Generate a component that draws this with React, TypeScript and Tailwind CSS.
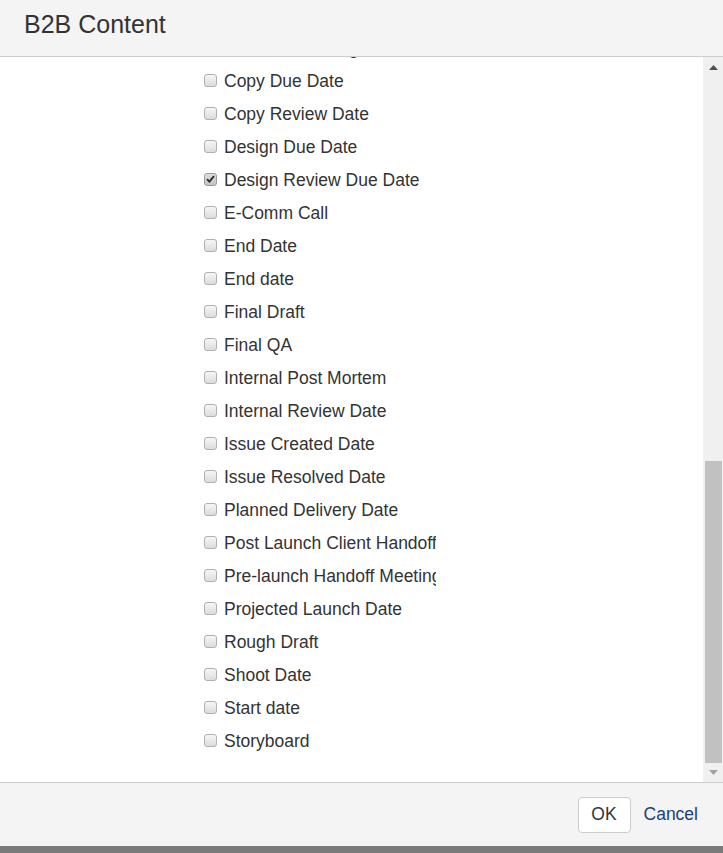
import React from "react";

const fields: { label: string; checked?: boolean }[] = [
  { label: "Content Planning" },
  { label: "Copy Due Date" },
  { label: "Copy Review Date" },
  { label: "Design Due Date" },
  { label: "Design Review Due Date", checked: true },
  { label: "E-Comm Call" },
  { label: "End Date" },
  { label: "End date" },
  { label: "Final Draft" },
  { label: "Final QA" },
  { label: "Internal Post Mortem" },
  { label: "Internal Review Date" },
  { label: "Issue Created Date" },
  { label: "Issue Resolved Date" },
  { label: "Planned Delivery Date" },
  { label: "Post Launch Client Handoff" },
  { label: "Pre-launch Handoff Meeting" },
  { label: "Projected Launch Date" },
  { label: "Rough Draft" },
  { label: "Shoot Date" },
  { label: "Start date" },
  { label: "Storyboard" },
];

function Box({ checked }: { checked?: boolean }) {
  return (
    <span
      className={
        "-mt-[3px] flex h-[13px] w-[13px] shrink-0 items-center justify-center rounded-[3px] border " +
        (checked
          ? "border-[#9a9a9a] bg-gradient-to-b from-[#dedede] to-[#c4c4c4]"
          : "border-[#b0b0b0] bg-gradient-to-b from-[#f6f6f6] to-[#dcdcdc]")
      }
    >
      {checked && (
        <svg width="9" height="8" viewBox="0 0 9 8">
          <path d="M1 4.2 L3.4 6.6 L8 1.2" fill="none" stroke="#2b2b2b" strokeWidth="1.9" />
        </svg>
      )}
    </span>
  );
}

function Scrollbar() {
  return (
    <div className="flex w-[20px] shrink-0 flex-col bg-[#f0f0f0]">
      <div className="flex h-[20px] items-center justify-center pl-[1px]">
        <svg width="9" height="5" viewBox="0 0 9 5">
          <path d="M0 5 L4.5 0 L9 5 Z" fill="#505050" />
        </svg>
      </div>
      <div className="flex flex-1 flex-col pl-[2px] pr-[1px]">
        <div className="flex-1" />
        <div className="h-[302px] bg-[#c1c1c1]" />
      </div>
      <div className="flex h-[19px] items-center justify-center pl-[1px]">
        <svg width="9" height="5" viewBox="0 0 9 5">
          <path d="M0 0 L9 0 L4.5 5 Z" fill="#a3a3a3" />
        </svg>
      </div>
    </div>
  );
}

export default function App() {
  return (
    <div
      className="flex h-[853px] w-[723px] flex-col overflow-hidden bg-white text-[#333333]"
      style={{ fontFamily: "'Liberation Sans', Arial, sans-serif" }}
    >
      <div className="relative z-10 flex h-[57px] shrink-0 items-start border-b border-[#cccccc] bg-[#f4f4f4] px-6 pt-[10px]">
        <h1 className="text-[25px] leading-[28px]">B2B Content</h1>
      </div>

      <div className="flex min-h-0 flex-1">
        <div className="flex-1 overflow-hidden pl-[204px]">
          <ul className="-mt-[25px] w-[232px] overflow-hidden">
            {fields.map((f) => (
              <li key={f.label} className="flex h-[33px] items-center gap-[7px] whitespace-nowrap text-[17.5px]">
                <Box checked={f.checked} />
                <span>{f.label}</span>
              </li>
            ))}
          </ul>
        </div>
        <Scrollbar />
      </div>

      <div className="flex h-[64px] shrink-0 items-center justify-end gap-[13px] border-t border-[#cccccc] bg-[#f4f4f4] pr-[25px]">
        <button className="h-[36px] w-[53px] rounded-[4px] border border-[#cccccc] bg-white text-[17.5px] text-[#333333]">
          OK
        </button>
        <a href="#" className="text-[17.5px] text-[#1c3f7a]">
          Cancel
        </a>
      </div>
      <div className="h-[7px] shrink-0 bg-[#7a7a7a]" />
    </div>
  );
}
